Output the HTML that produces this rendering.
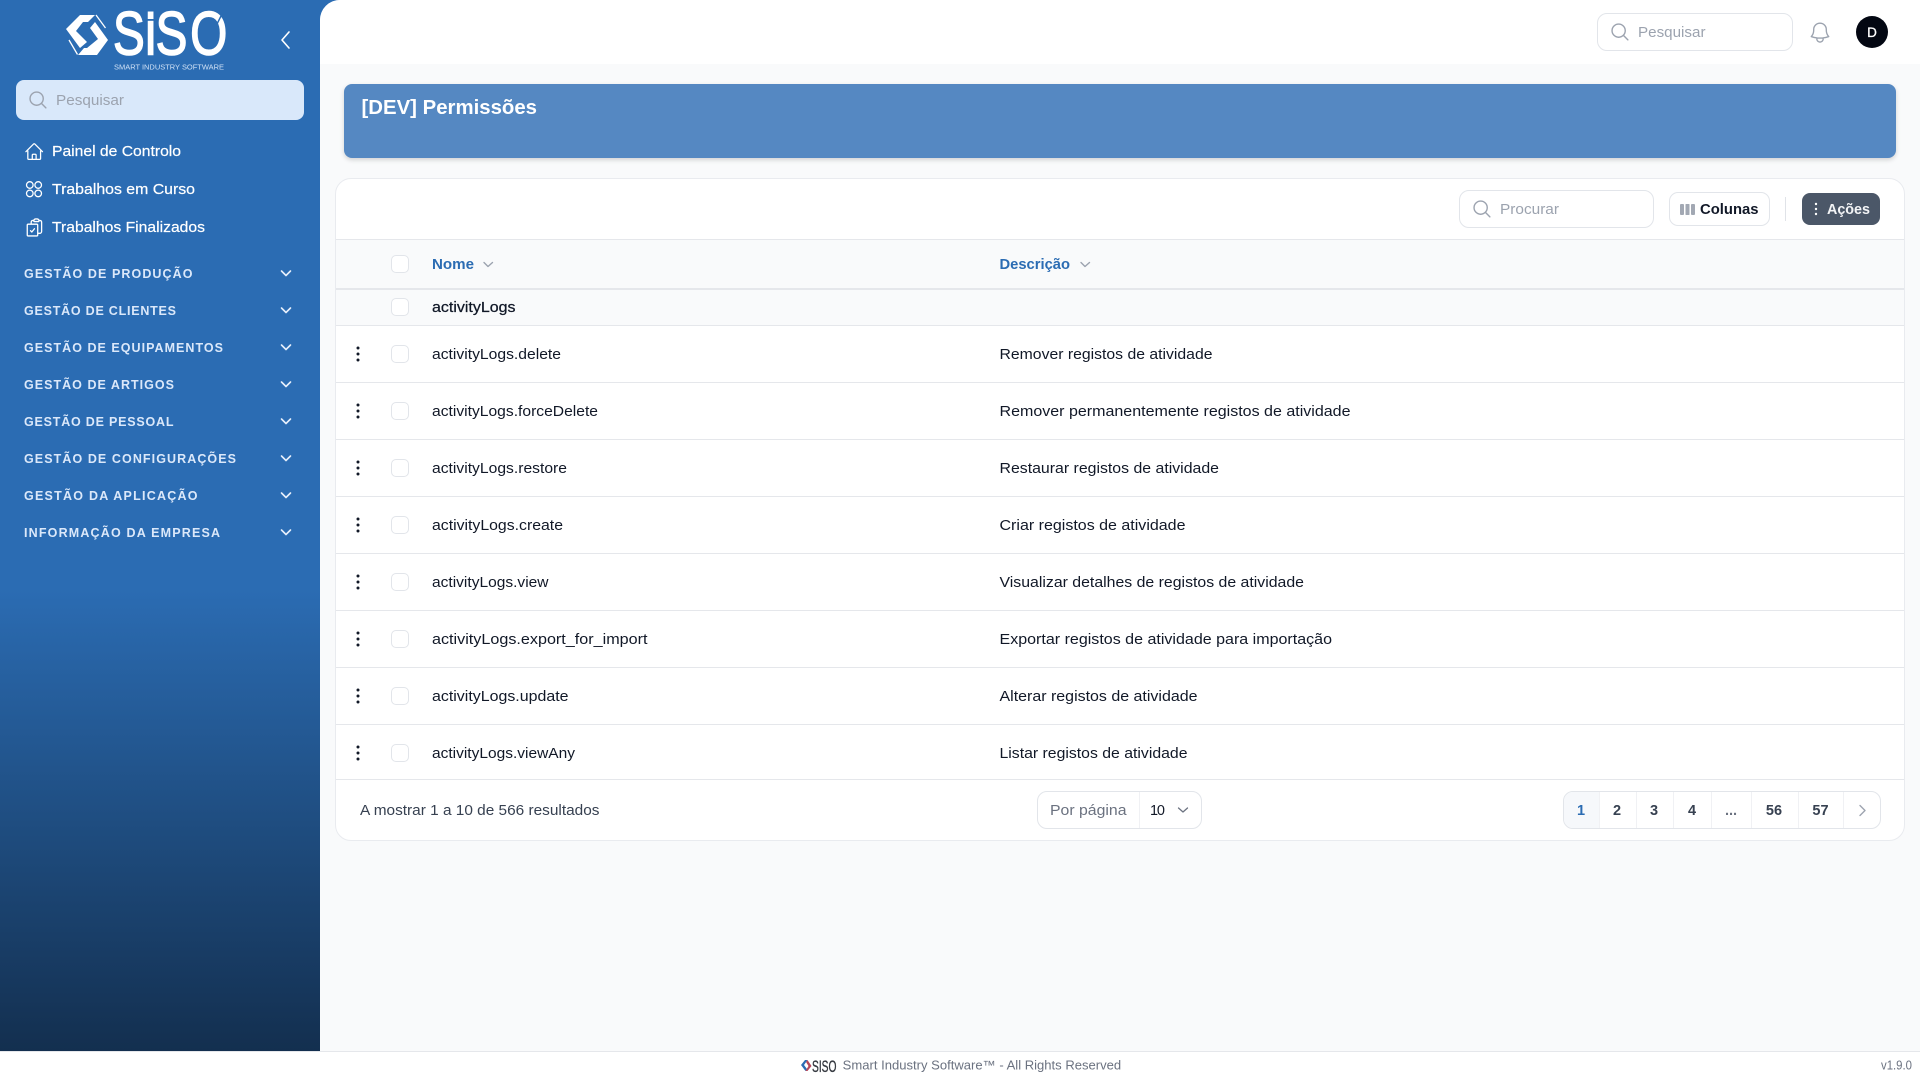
<!DOCTYPE html>
<html lang="pt">
<head>
<meta charset="utf-8">
<title>[DEV] Permissões</title>
<style>
html,body{margin:0;padding:0;width:1920px;height:1080px;overflow:hidden;background:#fff}
body{position:relative;font-family:"Liberation Sans",sans-serif}
.b{position:absolute;box-sizing:border-box}
.line{position:absolute;left:336px;width:1568px;height:1px;background:#e5e7eb}
.cb{position:absolute;left:391px;width:18px;height:18px;box-sizing:border-box;background:#fff;border:1px solid #e2e5ea;border-radius:5px}
.d{position:absolute;top:792px;width:1px;height:36px;background:#f0f1f4}
svg.layer{position:absolute;left:0;top:0}
svg text{font-family:"Liberation Sans",sans-serif}
.t{font-size:14.5px;fill:#111827}
.n{font-size:14.5px;fill:#fff;stroke:#fff;stroke-width:.2px}
.s{font-size:12.5px;font-weight:700;fill:#dbe8fa}
.ph{font-size:14.5px;fill:#9ca3af}
.pg{font-size:14.5px;font-weight:700;fill:#374151}
.ic{fill:none;stroke-linecap:round;stroke-linejoin:round}
</style>
</head>
<body>
<div class="b" style="left:0;top:0;width:345px;height:1051px;background:linear-gradient(180deg,#2b6cb3 0,#2b6cb3 56%,#132f4f 100%)"></div>
<div class="b" style="left:320px;top:0;width:1600px;height:1051px;background:#f9fafb;border-top-left-radius:20px"></div>
<div class="b" style="left:320px;top:0;width:1600px;height:64px;background:#fff;border-top-left-radius:20px"></div>
<div class="b" style="left:0;top:1051px;width:1920px;height:29px;background:#fff;border-top:1px solid #e5e7eb"></div>

<div class="b" style="left:16px;top:80px;width:288px;height:40px;background:#d9e8fa;border-radius:8px"></div>
<div class="b" style="left:1597px;top:13px;width:196px;height:38px;background:#fff;border:1px solid #e2e5ea;border-radius:10px"></div>
<div class="b" style="left:1856px;top:16px;width:32px;height:32px;background:#030712;border-radius:50%"></div>

<div class="b" style="left:344px;top:84px;width:1552px;height:74px;background:#5588c2;border-radius:8px;box-shadow:0 2px 5px rgba(0,0,0,.16)"></div>

<div class="b" style="left:335px;top:178px;width:1570px;height:663px;background:#fff;border:1px solid #e9ebef;border-radius:16px"></div>
<div class="b" style="left:336px;top:239px;width:1568px;height:87px;background:#f9fafb;border-top:1px solid #e5e7eb"></div>
<div class="line" style="top:288px;height:2px"></div>
<div class="line" style="top:325px"></div>
<div class="line" style="top:382px"></div>
<div class="line" style="top:439px"></div>
<div class="line" style="top:496px"></div>
<div class="line" style="top:553px"></div>
<div class="line" style="top:610px"></div>
<div class="line" style="top:667px"></div>
<div class="line" style="top:724px"></div>
<div class="line" style="top:779px"></div>

<div class="cb" style="top:255px"></div>
<div class="cb" style="top:298px"></div>
<div class="cb" style="top:345px"></div>
<div class="cb" style="top:402px"></div>
<div class="cb" style="top:459px"></div>
<div class="cb" style="top:516px"></div>
<div class="cb" style="top:573px"></div>
<div class="cb" style="top:630px"></div>
<div class="cb" style="top:687px"></div>
<div class="cb" style="top:744px"></div>

<div class="b" style="left:1459px;top:190px;width:195px;height:38px;background:#fff;border:1px solid #e2e5ea;border-radius:10px"></div>
<div class="b" style="left:1669px;top:192px;width:101px;height:34px;background:#fff;border:1px solid #e2e5ea;border-radius:9px"></div>
<div class="b" style="left:1785px;top:197px;width:1px;height:24px;background:#e0e3e8"></div>
<div class="b" style="left:1802px;top:193px;width:78px;height:32px;background:#4b5768;border-radius:8px"></div>

<div class="b" style="left:1037px;top:791px;width:165px;height:38px;background:#fff;border:1px solid #e2e5ea;border-radius:10px"></div>
<div class="d" style="left:1139px"></div>
<div class="b" style="left:1563px;top:791px;width:318px;height:38px;background:#fff;border:1px solid #e2e5ea;border-radius:10px"></div>
<div class="b" style="left:1564px;top:792px;width:35px;height:36px;background:#f6f8fb;border-radius:9px 0 0 9px"></div>
<div class="d" style="left:1599px"></div>
<div class="d" style="left:1636px"></div>
<div class="d" style="left:1673px"></div>
<div class="d" style="left:1711px"></div>
<div class="d" style="left:1751px"></div>
<div class="d" style="left:1798px"></div>
<div class="d" style="left:1843px"></div>

<svg class="layer" width="1920" height="1080" viewBox="0 0 1920 1080" xmlns="http://www.w3.org/2000/svg">
  <!-- logo -->
  <g fill="#fff">
    <path d="M66 29 80 15H95L88 22H83L76 31 87 42 80 48Z"/>
    <path d="M108 40 97 55H78L84 48H87L98 39 90 28 95 22Z"/>
    <path d="M96 15 105.5 28M69 40 77.5 54.5" stroke="#fff" stroke-width="1.3" fill="none"/>
  </g>
  <text transform="translate(0,54.5) scale(.78,1)" x="144.9 184.6 199.6 244" y="0" font-size="61" fill="#fff" stroke="#fff" stroke-width="1.6">SISO</text>
  <rect x="146" y="19" width="11" height="1.8" fill="#2b6cb3"/>
  <line x1="205" y1="48" x2="222" y2="14" stroke="#2b6cb3" stroke-width="1.4"/>
  <text x="114" y="69.5" font-size="7.6" fill="#cfe0f5" textLength="110" lengthAdjust="spacingAndGlyphs">SMART INDUSTRY SOFTWARE</text>
  <polyline class="ic" points="289,32 282,40 289,48" stroke="#fff" stroke-width="1.6"/>

  <!-- sidebar search -->
  <g transform="translate(27.4,89.4) scale(.88)"><path class="ic" stroke="#9ca3af" stroke-width="1.6" d="m21 21-5.197-5.197m0 0A7.5 7.5 0 1 0 5.196 5.196a7.5 7.5 0 0 0 10.607 10.607Z"/></g>
  <text class="ph" x="56" y="105" textLength="68" lengthAdjust="spacingAndGlyphs">Pesquisar</text>

  <!-- nav -->
  <g transform="translate(24,141.5) scale(.85)"><path class="ic" stroke="#fff" stroke-width="1.5" d="m2.25 12 8.954-8.955c.44-.439 1.152-.439 1.591 0L21.75 12M4.5 9.75v10.125c0 .621.504 1.125 1.125 1.125H9.75v-4.875c0-.621.504-1.125 1.125-1.125h2.25c.621 0 1.125.504 1.125 1.125V21h4.125c.621 0 1.125-.504 1.125-1.125V9.75M8.25 21h8.25"/></g>
  <g class="ic" stroke="#fff" stroke-width="1.3"><circle cx="29.8" cy="185" r="3.3"/><circle cx="38.2" cy="185" r="3.3"/><circle cx="29.8" cy="193.4" r="3.3"/><circle cx="38.2" cy="193.4" r="3.3"/></g>
  <g transform="translate(24,217) scale(.87)"><path class="ic" stroke="#fff" stroke-width="1.5" d="M11.35 3.836c-.065.21-.1.433-.1.664 0 .414.336.75.75.75h4.5a.75.75 0 0 0 .75-.75 2.25 2.25 0 0 0-.1-.664m-5.8 0A2.251 2.251 0 0 1 13.5 2.25H15c1.012 0 1.867.668 2.15 1.586m-5.8 0c-.376.023-.75.05-1.124.08C9.095 4.01 8.25 4.973 8.25 6.108V8.25m8.9-4.414c.376.023.75.05 1.124.08 1.131.094 1.976 1.057 1.976 2.192V16.5A2.25 2.25 0 0 1 18 18.75h-2.25m-7.5-10.5H4.875c-.621 0-1.125.504-1.125 1.125v11.25c0 .621.504 1.125 1.125 1.125h9.75c.621 0 1.125-.504 1.125-1.125V18.75m-7.5-10.5h6.375c.621 0 1.125.504 1.125 1.125v9.375m-8.25-3 1.5 1.5 3-3.75"/></g>
  <text class="n" x="52" y="156" textLength="129" lengthAdjust="spacingAndGlyphs">Painel de Controlo</text>
  <text class="n" x="52" y="194" textLength="143" lengthAdjust="spacingAndGlyphs">Trabalhos em Curso</text>
  <text class="n" x="52" y="232" textLength="153" lengthAdjust="spacingAndGlyphs">Trabalhos Finalizados</text>

  <!-- sections -->
  <text class="s" x="24" y="278" textLength="168.5">GESTÃO DE PRODUÇÃO</text>
  <text class="s" x="24" y="315" textLength="152">GESTÃO DE CLIENTES</text>
  <text class="s" x="24" y="352" textLength="199">GESTÃO DE EQUIPAMENTOS</text>
  <text class="s" x="24" y="389" textLength="150">GESTÃO DE ARTIGOS</text>
  <text class="s" x="24" y="426" textLength="149.5">GESTÃO DE PESSOAL</text>
  <text class="s" x="24" y="463" textLength="212">GESTÃO DE CONFIGURAÇÕES</text>
  <text class="s" x="24" y="500" textLength="173.5">GESTÃO DA APLICAÇÃO</text>
  <text class="s" x="24" y="537" textLength="196">INFORMAÇÃO DA EMPRESA</text>
  <g class="ic" stroke="#e6effb" stroke-width="1.6">
    <polyline points="281.5,271 286,275.5 290.5,271"/>
    <polyline points="281.5,308 286,312.5 290.5,308"/>
    <polyline points="281.5,345 286,349.5 290.5,345"/>
    <polyline points="281.5,382 286,386.5 290.5,382"/>
    <polyline points="281.5,419 286,423.5 290.5,419"/>
    <polyline points="281.5,456 286,460.5 290.5,456"/>
    <polyline points="281.5,493 286,497.5 290.5,493"/>
    <polyline points="281.5,530 286,534.5 290.5,530"/>
  </g>

  <!-- topbar -->
  <g transform="translate(1609.4,21.4) scale(.88)"><path class="ic" stroke="#9ca3af" stroke-width="1.6" d="m21 21-5.197-5.197m0 0A7.5 7.5 0 1 0 5.196 5.196a7.5 7.5 0 0 0 10.607 10.607Z"/></g>
  <text class="ph" x="1638" y="37" textLength="67.5" lengthAdjust="spacingAndGlyphs">Pesquisar</text>
  <g transform="translate(1807.4,20) scale(1.05)"><path class="ic" stroke="#9ca3af" stroke-width="1.3" d="M14.857 17.082a23.848 23.848 0 0 0 5.454-1.31A8.967 8.967 0 0 1 18 9.75V9A6 6 0 0 0 6 9v.75a8.967 8.967 0 0 1-2.312 6.022c1.733.64 3.56 1.085 5.455 1.31m5.714 0a24.255 24.255 0 0 1-5.714 0m5.714 0a3 3 0 1 1-5.714 0"/></g>
  <text x="1872" y="37" font-size="13.5" font-weight="400" fill="#fff" stroke="#fff" stroke-width=".3" text-anchor="middle">D</text>

  <!-- banner -->
  <text x="361.5" y="114" font-size="20" font-weight="700" fill="#fff" textLength="175.5" lengthAdjust="spacingAndGlyphs">[DEV] Permissões</text>

  <!-- toolbar -->
  <g transform="translate(1471.4,198.4) scale(.88)"><path class="ic" stroke="#9ca3af" stroke-width="1.6" d="m21 21-5.197-5.197m0 0A7.5 7.5 0 1 0 5.196 5.196a7.5 7.5 0 0 0 10.607 10.607Z"/></g>
  <text class="ph" x="1500" y="214" textLength="59" lengthAdjust="spacingAndGlyphs">Procurar</text>
  <g fill="#a2a8b3"><rect x="1680" y="204" width="4" height="11" rx="1"/><rect x="1685.5" y="204" width="4" height="11" rx=".5"/><rect x="1691" y="204" width="4" height="11" rx="1"/></g>
  <text x="1700" y="214" font-size="14.5" font-weight="700" fill="#111827" textLength="58.5" lengthAdjust="spacingAndGlyphs">Colunas</text>
  <g fill="#fff"><circle cx="1816" cy="204" r="1.2"/><circle cx="1816" cy="209" r="1.2"/><circle cx="1816" cy="214" r="1.2"/></g>
  <text x="1827" y="214" font-size="14.5" font-weight="700" fill="#f3f4f6" textLength="43" lengthAdjust="spacingAndGlyphs">Ações</text>

  <!-- table header -->
  <text x="432" y="269" font-size="14.5" font-weight="700" fill="#2b6cb3" textLength="42" lengthAdjust="spacingAndGlyphs">Nome</text>
  <polyline class="ic" points="484,262.5 488,266.5 492.5,262.5" stroke="#9ca3af" stroke-width="1.4"/>
  <text x="999.5" y="269" font-size="14.5" font-weight="700" fill="#2b6cb3" textLength="70.5" lengthAdjust="spacingAndGlyphs">Descrição</text>
  <polyline class="ic" points="1081,262.5 1085,266.5 1089.5,262.5" stroke="#9ca3af" stroke-width="1.4"/>

  <text class="t" x="432" y="312" stroke="#111827" stroke-width=".25" textLength="83.5" lengthAdjust="spacingAndGlyphs">activityLogs</text>

  <!-- rows -->
  <g fill="#111827">
    <circle cx="358" cy="348" r="1.5"/><circle cx="358" cy="354" r="1.5"/><circle cx="358" cy="360" r="1.5"/>
    <circle cx="358" cy="405" r="1.5"/><circle cx="358" cy="411" r="1.5"/><circle cx="358" cy="417" r="1.5"/>
    <circle cx="358" cy="462" r="1.5"/><circle cx="358" cy="468" r="1.5"/><circle cx="358" cy="474" r="1.5"/>
    <circle cx="358" cy="519" r="1.5"/><circle cx="358" cy="525" r="1.5"/><circle cx="358" cy="531" r="1.5"/>
    <circle cx="358" cy="576" r="1.5"/><circle cx="358" cy="582" r="1.5"/><circle cx="358" cy="588" r="1.5"/>
    <circle cx="358" cy="633" r="1.5"/><circle cx="358" cy="639" r="1.5"/><circle cx="358" cy="645" r="1.5"/>
    <circle cx="358" cy="690" r="1.5"/><circle cx="358" cy="696" r="1.5"/><circle cx="358" cy="702" r="1.5"/>
    <circle cx="358" cy="747" r="1.5"/><circle cx="358" cy="753" r="1.5"/><circle cx="358" cy="759" r="1.5"/>
  </g>
  <text class="t" x="432" y="359" textLength="129" lengthAdjust="spacingAndGlyphs">activityLogs.delete</text>
  <text class="t" x="999.5" y="359" textLength="213" lengthAdjust="spacingAndGlyphs">Remover registos de atividade</text>
  <text class="t" x="432" y="416" textLength="166" lengthAdjust="spacingAndGlyphs">activityLogs.forceDelete</text>
  <text class="t" x="999.5" y="416" textLength="351" lengthAdjust="spacingAndGlyphs">Remover permanentemente registos de atividade</text>
  <text class="t" x="432" y="473" textLength="135" lengthAdjust="spacingAndGlyphs">activityLogs.restore</text>
  <text class="t" x="999.5" y="473" textLength="219.5" lengthAdjust="spacingAndGlyphs">Restaurar registos de atividade</text>
  <text class="t" x="432" y="530" textLength="131" lengthAdjust="spacingAndGlyphs">activityLogs.create</text>
  <text class="t" x="999.5" y="530" textLength="186" lengthAdjust="spacingAndGlyphs">Criar registos de atividade</text>
  <text class="t" x="432" y="587" textLength="116.5" lengthAdjust="spacingAndGlyphs">activityLogs.view</text>
  <text class="t" x="999.5" y="587" textLength="304.5" lengthAdjust="spacingAndGlyphs">Visualizar detalhes de registos de atividade</text>
  <text class="t" x="432" y="644" textLength="215.5" lengthAdjust="spacingAndGlyphs">activityLogs.export_for_import</text>
  <text class="t" x="999.5" y="644" textLength="332.5" lengthAdjust="spacingAndGlyphs">Exportar registos de atividade para importação</text>
  <text class="t" x="432" y="701" textLength="136.5" lengthAdjust="spacingAndGlyphs">activityLogs.update</text>
  <text class="t" x="999.5" y="701" textLength="198" lengthAdjust="spacingAndGlyphs">Alterar registos de atividade</text>
  <text class="t" x="432" y="758" textLength="143" lengthAdjust="spacingAndGlyphs">activityLogs.viewAny</text>
  <text class="t" x="999.5" y="758" textLength="188" lengthAdjust="spacingAndGlyphs">Listar registos de atividade</text>

  <!-- table footer -->
  <text x="360" y="815" font-size="14.5" fill="#374151" textLength="239.5" lengthAdjust="spacingAndGlyphs">A mostrar 1 a 10 de 566 resultados</text>
  <text x="1050" y="815" font-size="14.5" fill="#6b7280" textLength="76.5" lengthAdjust="spacingAndGlyphs">Por página</text>
  <text x="1150" y="815" font-size="14.5" fill="#111827" textLength="15" lengthAdjust="spacing">10</text>
  <polyline class="ic" points="1178.5,808 1183,812 1187.5,808" stroke="#6b7280" stroke-width="1.3"/>

  <text class="pg" x="1581" y="815" text-anchor="middle" style="fill:#2b6cb3">1</text>
  <text class="pg" x="1617" y="815" text-anchor="middle">2</text>
  <text class="pg" x="1654" y="815" text-anchor="middle">3</text>
  <text class="pg" x="1692" y="815" text-anchor="middle">4</text>
  <text class="pg" x="1731" y="815" text-anchor="middle" style="fill:#6b7280">...</text>
  <text class="pg" x="1774" y="815" text-anchor="middle">56</text>
  <text class="pg" x="1820.5" y="815" text-anchor="middle">57</text>
  <polyline class="ic" points="1860,805.5 1865,810.5 1860,815.5" stroke="#9ca3af" stroke-width="1.4"/>

  <!-- footer -->
  <path d="M801 1065 805 1060 807.5 1060 804 1065 807 1069 805.5 1071Z" fill="#2b6cb3"/>
  <path d="M811.5 1066 807.5 1071 805.5 1071 808.5 1066 806 1062 807.5 1060Z" fill="#b5475a"/>
  <text x="812" y="1072" font-size="17" fill="#33373e" stroke="#33373e" stroke-width=".35" textLength="24.5" lengthAdjust="spacingAndGlyphs">SISO</text>
  <text x="842.7" y="1069.5" font-size="12.5" fill="#6b7280" textLength="278.5" lengthAdjust="spacingAndGlyphs">Smart Industry Software™ - All Rights Reserved</text>
  <text x="1881" y="1069.5" font-size="12.5" fill="#6b7280" textLength="31" lengthAdjust="spacingAndGlyphs">v1.9.0</text>
</svg>
</body>
</html>
